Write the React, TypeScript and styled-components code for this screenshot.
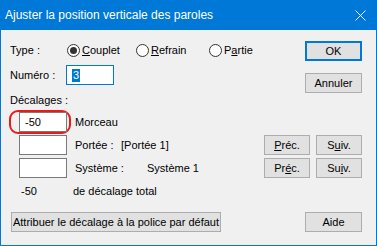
import { createGlobalStyle } from 'styled-components';
import styled from 'styled-components';

const GlobalStyle = createGlobalStyle`
  body {
    margin: 0;
    font-family: 'Liberation Sans', Arial, sans-serif;
    font-size: 11px;
    color: #000;
  }
`;

const Window = styled.div`
  width: 377px;
  height: 246px;
  box-sizing: border-box;
  border: 1px solid #0078d7;
  border-top: none;
  background: #f0f0f0;
  display: flex;
  flex-direction: column;
`;

const TitleBar = styled.div`
  height: 30px;
  margin: 0 -1px;
  background: #0078d7;
  color: #fff;
  display: flex;
  align-items: center;
  padding: 0 11px 0 5px;
  font-size: 12px;
`;

const TitleText = styled.span`
  flex: 1;
`;

const Body = styled.div`
  padding: 0 14px 0 9px;
  display: flex;
  flex-direction: column;
`;

const TopSection = styled.div`
  display: flex;
  justify-content: space-between;
`;

const LeftStack = styled.div`
  display: flex;
  flex-direction: column;
  padding-top: 10px;
`;

const RightStack = styled.div`
  display: flex;
  flex-direction: column;
  gap: 12px;
  padding-top: 11px;
`;

const Row = styled.div<{ $h: number; $mt: number }>`
  display: flex;
  align-items: center;
  height: ${(p) => p.$h}px;
  margin-top: ${(p) => p.$mt}px;
`;

const Label = styled.span<{ $w?: number }>`
  width: ${(p) => (p.$w ? `${p.$w}px` : 'auto')};
  flex-shrink: 0;
  white-space: nowrap;
`;

const RadioOption = styled.label<{ $w?: number }>`
  display: flex;
  align-items: center;
  gap: 2px;
  width: ${(p) => (p.$w ? `${p.$w}px` : 'auto')};
`;

const RadioCircle = styled.span<{ $checked?: boolean }>`
  width: 13px;
  height: 13px;
  box-sizing: border-box;
  border: 1px solid #333;
  border-radius: 50%;
  background: #fff;
  display: flex;
  align-items: center;
  justify-content: center;
  &::after {
    content: '';
    width: 7px;
    height: 7px;
    border-radius: 50%;
    background: ${(p) => (p.$checked ? '#333' : 'transparent')};
  }
`;

const Field = styled.div<{ $w: number; $focus?: boolean; $ml?: number }>`
  width: ${(p) => p.$w}px;
  height: 20px;
  box-sizing: border-box;
  border: 1px solid ${(p) => (p.$focus ? '#0078d7' : '#7a7a7a')};
  background: #fff;
  margin-left: ${(p) => p.$ml ?? 0}px;
  display: flex;
  align-items: center;
  padding-left: 5px;
`;

const Selected = styled.span`
  display: inline-block;
  height: 13px;
  line-height: 13px;
  background: #0078d7;
  color: #fff;
  padding: 0 1px;
`;

const Highlight = styled.div`
  margin-left: -1px;
  height: 24px;
  box-sizing: border-box;
  border: 2px solid #e81a1a;
  border-radius: 9px;
  padding: 0 2px 0 8px;
  display: flex;
  align-items: center;
  margin-right: 4px;
`;

const Button = styled.button<{ $w: number; $default?: boolean }>`
  width: ${(p) => p.$w}px;
  min-width: 0;
  flex-shrink: 0;
  height: 20px;
  box-sizing: border-box;
  background: #e1e1e1;
  border: ${(p) => (p.$default ? '2px solid #0078d7' : '1px solid #adadad')};
  font-family: inherit;
  font-size: 11px;
  color: #000;
  padding: 0;
  white-space: nowrap;
`;

const ButtonPair = styled.div`
  margin-left: auto;
  display: flex;
  gap: 6px;
`;

const CloseIcon = () => (
  <svg width="11" height="11" viewBox="0 0 11 11">
    <path d="M0.5 0.5 L10.5 10.5 M10.5 0.5 L0.5 10.5" stroke="#fff" strokeWidth="1" />
  </svg>
);

export default function App() {
  return (
    <>
      <GlobalStyle />
      <Window>
        <TitleBar>
          <TitleText>Ajuster la position verticale des paroles</TitleText>
          <CloseIcon />
        </TitleBar>
        <Body>
          <TopSection>
            <LeftStack>
              <Row $h={20} $mt={0}>
                <Label $w={57}>Type :</Label>
                <RadioOption $w={69}>
                  <RadioCircle $checked />
                  <span><u>C</u>ouplet</span>
                </RadioOption>
                <RadioOption $w={73}>
                  <RadioCircle />
                  <span><u>R</u>efrain</span>
                </RadioOption>
                <RadioOption>
                  <RadioCircle />
                  <span>P<u>a</u>rtie</span>
                </RadioOption>
              </Row>
              <Row $h={20} $mt={5}>
                <Label $w={56}>Numéro :</Label>
                <Field $w={48} $focus>
                  <Selected>3</Selected>
                </Field>
              </Row>
              <Row $h={16} $mt={7}>
                <Label>Décalages :</Label>
              </Row>
              <Row $h={24} $mt={2}>
                <Highlight>
                  <Field $w={48}>-50</Field>
                </Highlight>
                <Label>Morceau</Label>
              </Row>
            </LeftStack>
            <RightStack>
              <Button $w={57} $default>OK</Button>
              <Button $w={57}>Annuler</Button>
            </RightStack>
          </TopSection>
          <Row $h={20} $mt={1}>
            <Field $w={48} $ml={9} />
            <Label $w={46} style={{ marginLeft: 8 }}>Portée :</Label>
            <Label>[Portée 1]</Label>
            <ButtonPair>
              <Button $w={46}><u>P</u>réc.</Button>
              <Button $w={46}>S<u>u</u>iv.</Button>
            </ButtonPair>
          </Row>
          <Row $h={20} $mt={3}>
            <Field $w={48} $ml={9} />
            <Label $w={72} style={{ marginLeft: 8 }}>Système :</Label>
            <Label>Système 1</Label>
            <ButtonPair>
              <Button $w={46}>Pr<u>é</u>c.</Button>
              <Button $w={46}>Su<u>i</u>v.</Button>
            </ButtonPair>
          </Row>
          <Row $h={16} $mt={5}>
            <Label $w={52} style={{ marginLeft: 11 }}>-50</Label>
            <Label>de décalage total</Label>
          </Row>
          <Row $h={20} $mt={13}>
            <Button $w={210} style={{ marginLeft: 1 }}>Attribuer le décalage à la police par défaut</Button>
            <Button $w={57} style={{ marginLeft: 'auto' }}>Aide</Button>
          </Row>
        </Body>
      </Window>
    </>
  );
}
